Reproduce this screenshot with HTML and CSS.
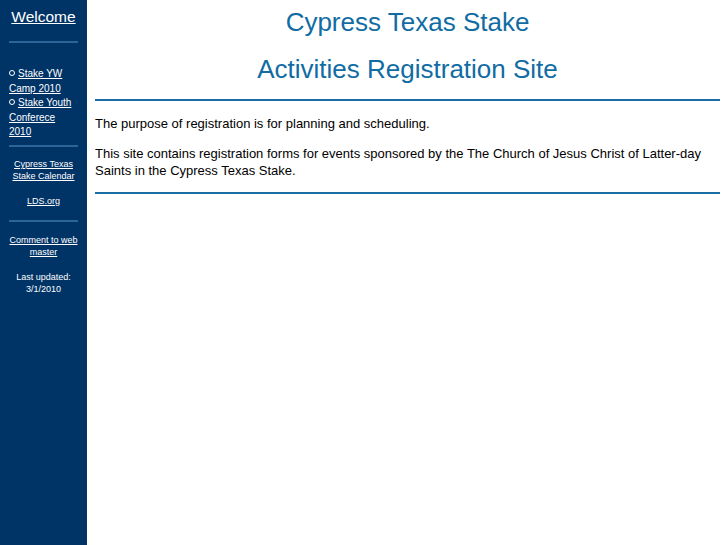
FILE: index.html
```html
<!DOCTYPE html>
<html>
<head>
<meta charset="utf-8">
<title>Cypress Texas Stake</title>
<link rel="stylesheet" href="styles.css">
</head>
<body>
<div class="page">
  <nav class="sidebar">
    <div class="welcome"><a href="#">Welcome</a></div>
    <hr class="side-rule">
    <ul class="events">
      <li><a href="#">Stake YW Camp 2010</a></li>
      <li><a href="#">Stake Youth Conferece 2010</a></li>
    </ul>
    <hr class="side-rule">
    <div class="side-center">
      <p class="side-p"><a href="#">Cypress Texas Stake Calendar</a></p>
      <p class="side-p lds"><a href="#">LDS.org</a></p>
    </div>
    <hr class="side-rule">
    <div class="side-center tight">
      <p class="side-p"><a href="#">Comment to web master</a></p>
      <p class="side-p updated">Last updated: 3/1/2010</p>
    </div>
  </nav>
  <main class="main">
    <h1 class="title">Cypress Texas Stake</h1>
    <h1 class="title second">Activities Registration Site</h1>
    <hr class="main-rule">
    <p class="text">The purpose of registration is for planning and scheduling.</p>
    <p class="text">This site contains registration forms for events sponsored by the The Church of Jesus Christ of Latter-day Saints in the Cypress Texas Stake.</p>
    <hr class="main-rule">
  </main>
</div>
</body>
</html>
```
FILE: styles.css
```css
html, body {
  margin: 0;
  padding: 0;
  height: 100%;
}
body {
  font-family: "Liberation Sans", Arial, sans-serif;
  background: #ffffff;
  color: #000000;
}
.page {
  display: flex;
  min-height: 545px;
}
.sidebar {
  width: 87px;
  flex: none;
  background: #003366;
  color: #ffffff;
  padding: 0 9px;
  box-sizing: border-box;
}
.sidebar a {
  color: #ffffff;
}
.welcome {
  text-align: center;
  font-size: 15.5px;
  line-height: 18px;
  padding-top: 8px;
}
.side-rule {
  border: 0;
  height: 2px;
  background: #2a6699;
  margin: 15px 0 0;
}
.events {
  list-style: none;
  margin: 24px 0 0;
  padding: 0;
  font-size: 10px;
  line-height: 14.6px;
}
.events li::before {
  content: "";
  display: inline-block;
  width: 4px;
  height: 4px;
  border: 1px solid #ffffff;
  border-radius: 50%;
  margin-right: 3px;
  vertical-align: 1px;
}
.events + .side-rule {
  margin-top: 5px;
}
.side-center {
  text-align: center;
  font-size: 9px;
  line-height: 12.5px;
  padding-top: 11px;
}
.side-center.tight {
  line-height: 12px;
  padding-top: 12px;
}
.side-p {
  margin: 0;
}
.lds {
  margin-top: 12px;
}
.side-center + .side-rule {
  margin-top: 13px;
}
.updated {
  margin-top: 12px;
}
.tight .updated {
  margin-top: 12.5px;
}
.main {
  flex: 1;
  padding: 0 7px 0 8px;
}
.title {
  margin: 0;
  text-align: center;
  font-weight: normal;
  font-size: 26px;
  line-height: 30px;
  color: #116ca3;
  padding-top: 7px;
}
.title.second {
  padding-top: 17px;
}
.main-rule {
  border: 0;
  height: 2px;
  background: #1a6ea3;
  margin: 15px 0 0;
}
.text {
  font-size: 13px;
  line-height: 17px;
  margin: 14px 0 0;
}
.text + .text {
  margin-top: 13px;
}
.text + .main-rule {
  margin-top: 13px;
}
```
